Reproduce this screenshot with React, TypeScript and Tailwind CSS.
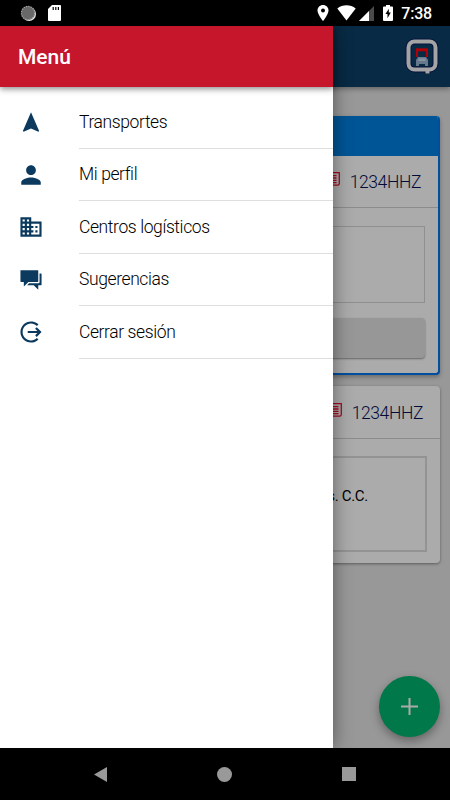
import type { ComponentType } from 'react';
import { IoMdNavigate, IoMdPerson, IoMdBusiness, IoMdChatboxes, IoMdLogOut } from 'react-icons/io';

interface MenuItem {
  label: string;
  icon: ComponentType<{ className?: string }>;
}

const menuItems: MenuItem[] = [
  { label: 'Transportes', icon: IoMdNavigate },
  { label: 'Mi perfil', icon: IoMdPerson },
  { label: 'Centros logísticos', icon: IoMdBusiness },
  { label: 'Sugerencias', icon: IoMdChatboxes },
  { label: 'Cerrar sesión', icon: IoMdLogOut },
];

function StatusBar() {
  return (
    <div className="flex h-[26px] shrink-0 items-center justify-between bg-black pr-[18px] pl-[20px] text-white">
      <div className="flex items-center gap-[12px]">
        <svg width="17" height="17" viewBox="0 0 17 17">
          <circle cx="9" cy="9" r="7" fill="#e8e8e8" />
          <circle cx="8" cy="8" r="7" fill="#686868" />
          <circle cx="8" cy="8" r="6.6" fill="none" stroke="#a5a5a5" strokeWidth="1.2" strokeDasharray="1.2 1.2" />
        </svg>
        <svg width="13" height="16" viewBox="0 0 13 16" className="-ml-[1px]">
          <path d="M4 0h8a1 1 0 0 1 1 1v14a1 1 0 0 1-1 1H1a1 1 0 0 1-1-1V4z" fill="#fff" />
          <path d="M5.2 2v3M7.8 2v3M10.4 2v3" stroke="#000" strokeWidth="1.2" />
        </svg>
      </div>
      <div className="flex items-center">
        <svg width="12" height="16" viewBox="0 0 12 16">
          <path d="M6 0C2.8 0 .5 2.4.5 5.5.5 9.5 6 16 6 16s5.5-6.5 5.5-10.5C11.5 2.4 9.2 0 6 0z" fill="#fff" />
          <circle cx="6" cy="5.5" r="2" fill="#000" />
        </svg>
        <svg width="19" height="16" viewBox="0 0 19 16" className="ml-[8px]">
          <path d="M9.5 15.5L.3 3.5C5.5-.8 13.5-.8 18.7 3.5z" fill="#fff" />
        </svg>
        <svg width="15" height="15" viewBox="0 0 15 15" className="mt-[1px] ml-[3px]">
          <path d="M15 0v15H0z" fill="#4a4a4a" />
          <path d="M10 5v10H0z" fill="#fff" />
        </svg>
        <svg width="10" height="16" viewBox="0 0 10 16" className="ml-[9px]">
          <path d="M3 0h4v1.5h2a1 1 0 0 1 1 1V15a1 1 0 0 1-1 1H1a1 1 0 0 1-1-1V2.5a1 1 0 0 1 1-1h2z" fill="#fff" />
          <path d="M5.8 3.8L2.5 9h2v4.2L7.8 7.6h-2z" fill="#000" />
        </svg>
        <span className="ml-[8px] pt-[2px] text-[16px] leading-none font-medium tracking-[-0.2px]">7:38</span>
      </div>
    </div>
  );
}

function Logo() {
  const bubble = 'M20.5 32.5h-11a6 6 0 0 1-6-6V10.5a6 6 0 0 1 6-6h15a6 6 0 0 1 6 6v16a6 6 0 0 1-6 6H22.5v4';

  return (
    <svg width="34" height="38" viewBox="0 0 34 38" className="-mt-[1px]">
      <path d={bubble} fill="#082a44" stroke="#04123c" strokeWidth="6" />
      <path d={bubble} fill="none" stroke="#a4a4a4" strokeWidth="4" />
      <path d="M12 20v-7h10v7" fill="none" stroke="#b00008" strokeWidth="2" />
      <path d="M11 12.8h12" stroke="#b00008" strokeWidth="3" />
      <path d="M13 20h8l2 3v6h-3v-2h-6v2h-3v-6z" fill="#66798c" />
      <path d="M13.8 21.5h6.400l.8 2.500h-8z" fill="#8593a0" />
    </svg>
  );
}

function Plate() {
  return (
    <div className="flex items-center">
      <svg width="16" height="14" viewBox="0 0 16 14" fill="none" stroke="#a50d20" strokeWidth="1.3" className="-mt-[4px]">
        <path d="M3 .7h12.3v10.8a1.6 1.6 0 0 1-1.6 1.6H2" />
        <path d="M5 3.6h7.500M5 6h7.500M5 8.400h7.500M5 10.600h7.500" />
      </svg>
      <span className="ml-[10px] pt-[2px] text-[17.5px] font-light tracking-[-0.4px] text-[#020a38]">1234HHZ</span>
    </div>
  );
}

function Page() {
  return (
    <div className="flex h-full flex-col bg-[#989898]">
      <header className="flex h-[61px] shrink-0 items-center justify-end bg-[#082a44] pr-[11px] shadow-[0_2px_5px_rgba(0,0,0,0.35)]">
        <Logo />
      </header>
      <main className="flex flex-col gap-[11px] px-[10px] pt-[29px]">
        <section className="flex h-[259px] flex-col overflow-hidden rounded-[4px] border-2 border-t-0 border-[#004f9f] bg-[#ababab] shadow-[0_2px_4px_rgba(0,0,0,0.3)]">
          <div className="-mx-[2px] h-[39.5px] shrink-0 bg-[#005596]" />
          <div className="flex h-[52px] shrink-0 items-center justify-end border-b border-[#8c8c8c] pr-[17px]">
            <Plate />
          </div>
          <div className="flex flex-col gap-[15px] px-[13px] pt-[18px]">
            <div className="h-[77px] border-[1.5px] border-[#8f8f8f]" />
            <div className="h-[40px] rounded-[4px] bg-[#979797] shadow-[0_1px_2px_rgba(0,0,0,0.4)]" />
          </div>
        </section>
        <section className="flex h-[177px] flex-col rounded-[4px] bg-[#ababab] shadow-[0_1px_3px_rgba(0,0,0,0.4)]">
          <div className="flex h-[53px] shrink-0 items-center justify-end border-b border-[#8c8c8c] pr-[17px]">
            <Plate />
          </div>
          <div className="mx-[13px] mt-[17px] flex h-[96px] items-center justify-end border-2 border-[#939393] pr-[57px] pb-[15px] text-[15px] tracking-[-0.3px] text-black">
            s. C.C.
          </div>
        </section>
      </main>
      <button className="absolute right-[10px] bottom-[11px] flex size-[61px] items-center justify-center rounded-full bg-[#007849] shadow-[0_4px_10px_rgba(0,0,0,0.35)]">
        <svg width="17" height="17" viewBox="0 0 17 17" stroke="#ababab" strokeWidth="2">
          <path d="M8.5 0v17M0 8.5h17" />
        </svg>
      </button>
    </div>
  );
}

function SideMenu() {
  return (
    <nav className="absolute inset-y-0 left-0 w-[332.5px] bg-white shadow-[0_0_18px_rgba(0,0,0,0.45)]">
      <div className="flex h-[61px] items-center bg-[#c5162c] pt-[2px] pl-[18px] shadow-[0_2px_6px_rgba(0,0,0,0.45)]">
        <h1 className="text-[21px] font-medium text-white">Menú</h1>
      </div>
      <ul className="pt-[9px]">
        {menuItems.map(({ label, icon: Icon }) => (
          <li key={label} className="flex h-[52.5px] items-center pl-[17.5px]">
            <Icon className="size-[26px] text-[#0b3a5e]" />
            <span className="ml-[35.5px] flex h-full flex-1 items-center border-b border-[#dedede] text-[17.5px] font-light tracking-[-0.4px] text-black">
              {label}
            </span>
          </li>
        ))}
      </ul>
    </nav>
  );
}

function NavigationBar() {
  return (
    <div className="flex h-[52px] shrink-0 items-center justify-between bg-black px-[94px]">
      <svg width="13" height="15" viewBox="0 0 13 15">
        <path d="M0 7.5L13 0v15z" fill="#999" />
      </svg>
      <div className="size-[15px] rounded-full bg-[#999]" />
      <div className="size-[14px] bg-[#999]" />
    </div>
  );
}

export default function App() {
  return (
    <div className="flex h-[800px] w-[450px] flex-col overflow-hidden bg-black font-['Roboto',sans-serif]">
      <StatusBar />
      <div className="relative min-h-0 flex-1 overflow-hidden">
        <Page />
        <SideMenu />
      </div>
      <NavigationBar />
    </div>
  );
}
